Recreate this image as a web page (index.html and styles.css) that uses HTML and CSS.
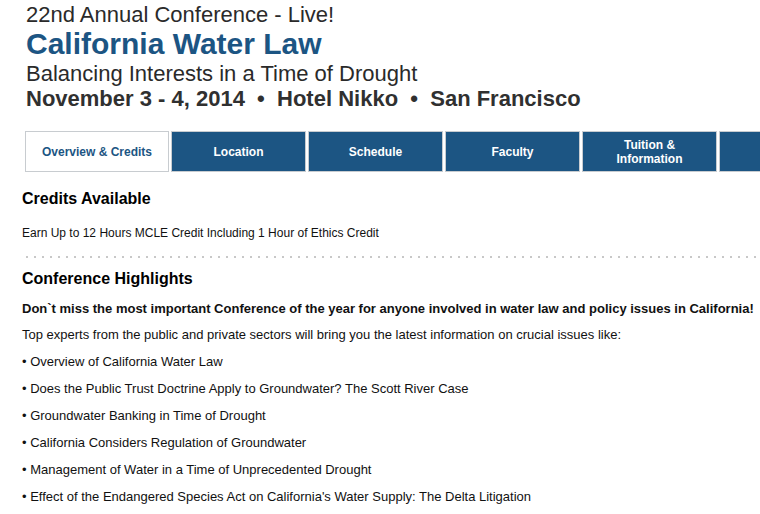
FILE: index.html
```html
<!DOCTYPE html>
<html>
<head>
<meta charset="utf-8">
<link rel="stylesheet" href="styles.css">
</head>
<body>
<header class="masthead">
  <div class="kicker">22nd Annual Conference - Live!</div>
  <h1 class="title">California Water Law</h1>
  <div class="subtitle">Balancing Interests in a Time of Drought</div>
  <div class="dateline">November 3 - 4, 2014 &nbsp;&bull;&nbsp; Hotel Nikko &nbsp;&bull;&nbsp; San Francisco</div>
</header>
<nav class="tabs">
  <a class="tab tab-active">Overview &amp; Credits</a>
  <a class="tab">Location</a>
  <a class="tab">Schedule</a>
  <a class="tab">Faculty</a>
  <a class="tab">Tuition &amp;<br>Information</a>
  <a class="tab tab-cut"></a>
</nav>
<main class="content">
  <h2 class="section-title first">Credits Available</h2>
  <p class="line small">Earn Up to 12 Hours MCLE Credit Including 1 Hour of Ethics Credit</p>
  <div class="divider"></div>
  <h2 class="section-title">Conference Highlights</h2>
  <p class="line strong">Don`t miss the most important Conference of the year for anyone involved in water law and policy issues in California!</p>
  <p class="line intro">Top experts from the public and private sectors will bring you the latest information on crucial issues like:</p>
  <p class="line">&bull; Overview of California Water Law</p>
  <p class="line">&bull; Does the Public Trust Doctrine Apply to Groundwater? The Scott River Case</p>
  <p class="line">&bull; Groundwater Banking in Time of Drought</p>
  <p class="line">&bull; California Considers Regulation of Groundwater</p>
  <p class="line">&bull; Management of Water in a Time of Unprecedented Drought</p>
  <p class="line">&bull; Effect of the Endangered Species Act on California's Water Supply: The Delta Litigation</p>
</main>
</body>
</html>
```
FILE: styles.css
```css
html, body {
  margin: 0;
  padding: 0;
  background: #fff;
}
body {
  font-family: "Liberation Sans", Arial, Helvetica, sans-serif;
  color: #111;
  overflow: hidden;
  width: 760px;
  height: 514px;
}
.masthead {
  padding-left: 26px;
  color: #2a2a2a;
  white-space: nowrap;
}
.kicker {
  font-size: 22px;
  line-height: 30px;
}
.title {
  margin: 0;
  font-size: 30px;
  line-height: 27px;
  font-weight: bold;
  color: #1c5583;
}
.subtitle {
  font-size: 22px;
  line-height: 33px;
}
.dateline {
  font-size: 22px;
  line-height: 17px;
  font-weight: bold;
  color: #303030;
}
.tabs {
  display: flex;
  gap: 2px;
  margin-top: 24px;
  padding-left: 25px;
  height: 41px;
  white-space: nowrap;
}
.tab {
  box-sizing: border-box;
  flex: 0 0 135px;
  height: 41px;
  display: flex;
  align-items: center;
  justify-content: center;
  text-align: center;
  border: 1px solid #c8ccd0;
  background: #1c5583;
  color: #fff;
  font-size: 12px;
  line-height: 14px;
  font-weight: bold;
}
.tab-active {
  flex-basis: 144px;
  background: #fff;
  color: #1c5583;
}
.tab-cut {
  flex-basis: 60px;
}
.content {
  padding-left: 22px;
}
.section-title {
  margin: 11px 0 0;
  font-size: 16px;
  line-height: 20px;
  font-weight: bold;
  color: #000;
}
.section-title.first {
  margin-top: 17px;
}
.line {
  margin: 0;
  font-size: 13px;
  line-height: 27px;
  white-space: nowrap;
}
.line.small {
  font-size: 12px;
}
.section-title + .line {
  margin-top: 6px;
}
.section-title.first + .line {
  margin-top: 11px;
}
.strong {
  font-weight: bold;
}
.intro {
  margin-top: -1px;
}
.divider {
  height: 2px;
  margin: 9px 0 0 4px;
  background: repeating-linear-gradient(to right, #c8c8c8 0 2px, transparent 2px 8px);
}
```
